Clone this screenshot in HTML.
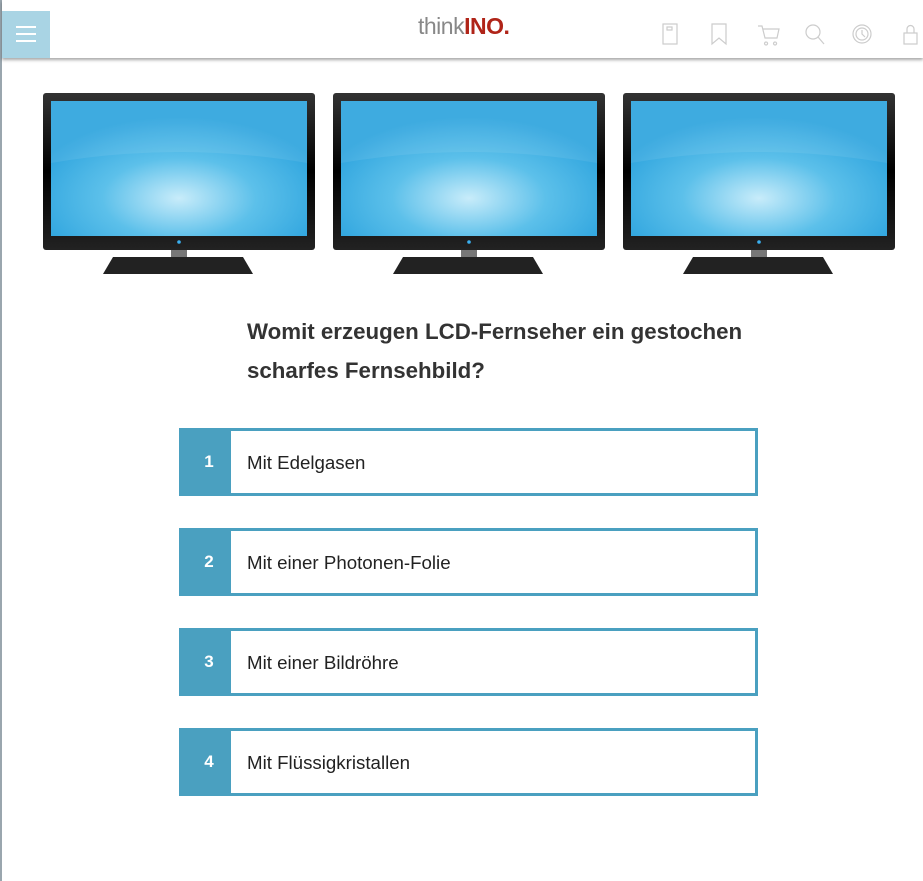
<!DOCTYPE html>
<html><head><meta charset="utf-8"><style>
body{margin:0;width:923px;height:881px;background:#fff;font-family:"Liberation Sans",sans-serif;position:relative;overflow:hidden}
.lb{position:absolute;left:0;top:0;width:2px;height:881px;background:#9aa6ae}
.hd{position:absolute;left:2px;top:0;right:0;height:58px;background:#fff;box-shadow:0 2px 3px rgba(0,0,0,.35)}
.menu{position:absolute;left:2px;top:11px;width:48px;height:47px;background:#a9d4e4}
.menu i{position:absolute;left:14px;width:20px;height:2px;background:#fff}
.logo{position:absolute;left:418px;top:13px;font-size:23px;letter-spacing:-.5px;color:#888}
.logo b{color:#b02418;font-weight:bold}
.ic{position:absolute;top:22px}
.tv{position:absolute;top:93px;width:272px;height:182px}
.q{position:absolute;left:247px;top:312px;font-size:22.3px;font-weight:bold;color:#333;line-height:39px;width:540px}
.a{position:absolute;left:179px;width:576px;height:62px;border:3px solid #4aa0c0;border-left:none;background:#fff}
.a .n{position:absolute;left:0;top:-3px;width:60px;height:68px;padding-right:0;box-sizing:border-box;color:#fff;font-weight:bold;font-size:17px;line-height:68px;text-align:center}
.a .bl{position:absolute;left:0;top:-3px;width:52px;height:68px;background:#4aa0c0}
.a .t{position:absolute;left:68px;top:0;line-height:64px;font-size:18.7px;color:#222}
</style></head><body>
<div class="lb"></div>
<div class="hd"></div>
<div class="menu"><i style="top:15px"></i><i style="top:22px"></i><i style="top:29px"></i></div>
<div class="logo">think<b>INO.</b></div>
<svg class="ic" style="left:660px" width="263" height="26" fill="none" stroke="#ccc" stroke-width="1.2">
<rect x="3" y="2" width="14" height="20"/><rect x="7" y="5" width="5" height="3"/>
<path d="M52 2h14v20l-7-6-7 6z"/>
<path d="M98 4h4l3 12h12l2-9h-16M106 20a1.5 1.5 0 1 0 .1 0M115 20a1.5 1.5 0 1 0 .1 0"/>
<circle cx="153" cy="10" r="7"/><path d="M158 15l6 7"/>
<circle cx="202" cy="12" r="9"/><circle cx="202" cy="12" r="6"/><path d="M202 8v4l3 3"/>
<rect x="244" y="11" width="13" height="11"/><path d="M247 11v-4a3.5 3.5 0 0 1 7 0v4"/>
</svg>
<svg width="0" height="0" style="position:absolute"><defs>
<radialGradient id="sc" cx="0.5" cy="0.72" r="0.6"><stop offset="0" stop-color="#c8ecfa"/><stop offset="0.5" stop-color="#5cc0ea"/><stop offset="1" stop-color="#2ea4de"/></radialGradient>
<linearGradient id="bz" x1="0" y1="0" x2="0" y2="1"><stop offset="0" stop-color="#333"/><stop offset=".5" stop-color="#000"/><stop offset="1" stop-color="#222"/></linearGradient>
<g id="tv">
<rect x="0" y="0" width="272" height="157" rx="3" fill="url(#bz)"/>
<rect x="8" y="8" width="256" height="135" fill="url(#sc)"/>
<path d="M8 8h256v62q-128 -22 -256 0z" fill="#fff" opacity=".08"/>
<circle cx="136" cy="149" r="1.8" fill="#3ab0f0"/>
<rect x="128" y="157" width="16" height="8" fill="#777"/>
<path d="M70 164h130l10 17h-150z" fill="#222"/>
</g></defs></svg>
<svg class="tv" style="left:43px"><use href="#tv"/></svg>
<svg class="tv" style="left:333px"><use href="#tv"/></svg>
<svg class="tv" style="left:623px"><use href="#tv"/></svg>
<div class="q">Womit erzeugen LCD-Fernseher ein gestochen scharfes Fernsehbild?</div>
<div class="a" style="top:428px"><div class="bl"></div><div class="n">1</div><div class="t">Mit Edelgasen</div></div>
<div class="a" style="top:528px"><div class="bl"></div><div class="n">2</div><div class="t">Mit einer Photonen-Folie</div></div>
<div class="a" style="top:628px"><div class="bl"></div><div class="n">3</div><div class="t">Mit einer Bildröhre</div></div>
<div class="a" style="top:728px"><div class="bl"></div><div class="n">4</div><div class="t">Mit Flüssigkristallen</div></div>
</body></html>
